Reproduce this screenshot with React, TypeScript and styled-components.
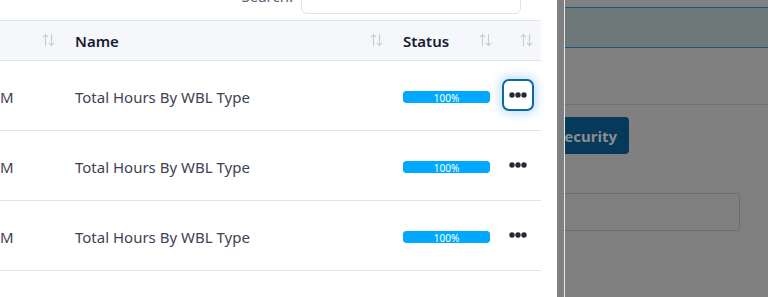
import styled, { createGlobalStyle, css } from 'styled-components';

const GlobalStyle = createGlobalStyle`
  html, body {
    margin: 0;
    padding: 0;
    background: #808080;
    overflow: hidden;
  }
  * {
    box-sizing: border-box;
  }
`;

const rows = [
  { time: 'M', name: 'Total Hours By WBL Type', progress: 100, focused: true },
  { time: 'M', name: 'Total Hours By WBL Type', progress: 100, focused: false },
  { time: 'M', name: 'Total Hours By WBL Type', progress: 100, focused: false },
];

const headers = ['', 'Name', 'Status', ''];

const SortIcon = () => (
  <svg width="13" height="14" viewBox="0 0 13 14" fill="none" stroke="#c9ccd4" strokeWidth="1.1">
    <path d="M3.5 13V1.5M1 4L3.5 1.5L6 4" />
    <path d="M9.5 1V12.5M7 10L9.5 12.5L12 10" />
  </svg>
);

const Dots = () => (
  <svg width="18" height="6" viewBox="0 0 18 6" fill="#252a35">
    <circle cx="3" cy="3" r="2.7" />
    <circle cx="9" cy="3" r="2.7" />
    <circle cx="15" cy="3" r="2.7" />
  </svg>
);

const App = () => {
  return (
    <>
      <GlobalStyle />
      <Page>
        <ListPanel>
          <SearchRow>
            <SearchLabel>
              Search:
              <SearchInput type="text" />
            </SearchLabel>
          </SearchRow>
          <Table>
            <HeaderRow>
              {headers.map((h, i) => (
                <HeadCell key={i} $flush={i === 0}>
                  <span>{h}</span>
                  <SortIcon />
                </HeadCell>
              ))}
            </HeaderRow>
            {rows.map((row, i) => (
              <BodyRow key={i}>
                <Cell $flush>{row.time}</Cell>
                <Cell>{row.name}</Cell>
                <Cell>
                  <Progress>
                    <ProgressFill style={{ width: `${row.progress}%` }}>{row.progress}%</ProgressFill>
                  </Progress>
                </Cell>
                <ActionCell>
                  <MenuButton $focused={row.focused}>
                    <Dots />
                  </MenuButton>
                </ActionCell>
              </BodyRow>
            ))}
          </Table>
        </ListPanel>

        <Backdrop>
          <DimmedForm>
            <TopBand />
            <Section />
            <ButtonRow>
              <DimButton>Security</DimButton>
            </ButtonRow>
            <DimInput />
          </DimmedForm>
        </Backdrop>
      </Page>
    </>
  );
};

const Page = styled.div`
  display: grid;
  grid-template-columns: 557px 1fr;
  width: 768px;
  height: 297px;
  overflow: hidden;
  font-family: 'Noto Sans', 'Open Sans', sans-serif;
`;

const ListPanel = styled.div`
  background: #ffffff;
  overflow: hidden;
`;

const SearchRow = styled.div`
  height: 20px;
  display: flex;
  justify-content: flex-end;
  align-items: flex-end;
  padding: 0 36px 6px 0;
  overflow: hidden;
`;

const SearchLabel = styled.label`
  display: flex;
  align-items: center;
  gap: 8px;
  font-size: 15px;
  color: #5e6278;
  padding-top: 10px;
`;

const SearchInput = styled.input`
  width: 220px;
  height: 36px;
  border: 1px solid #dde3ea;
  border-radius: 6px;
  background: #fff;
  outline: none;
`;

const Table = styled.div`
  width: 541px;
`;

const columns = '63px 328px 109px 41px';

const HeaderRow = styled.div`
  display: grid;
  grid-template-columns: ${columns};
  height: 41px;
  background: #f5f7fa;
  border-top: 1px solid #dfe4ea;
  border-bottom: 1px solid #dfe4ea;
`;

const HeadCell = styled.div<{ $flush?: boolean }>`
  display: flex;
  align-items: center;
  justify-content: space-between;
  padding: 0 8px 0 ${(p) => (p.$flush ? '0' : '12px')};
  font-size: 15px;
  font-weight: 600;
  color: #181c32;

  svg {
    margin-top: -2px;
  }
`;

const BodyRow = styled.div`
  display: grid;
  grid-template-columns: ${columns};
  height: 70px;
  border-bottom: 1px solid #dfe4ea;
  align-items: center;
`;

const Cell = styled.div<{ $flush?: boolean }>`
  padding: 2px 8px 0 ${(p) => (p.$flush ? '0' : '12px')};
  font-size: 15px;
  color: #3f4254;
  white-space: nowrap;
  overflow: hidden;
`;

const ActionCell = styled.div`
  padding-left: 2px;
  display: flex;
  align-items: center;
`;

const Progress = styled.div`
  width: 87px;
  height: 12px;
  margin-top: 1px;
  border-radius: 3px;
  background: #e9edf2;
  overflow: hidden;
`;

const ProgressFill = styled.div`
  height: 100%;
  background: #00a9ff;
  color: #fff;
  font-size: 10px;
  line-height: 15px;
  text-align: center;
  border-radius: 3px;
`;

const MenuButton = styled.button<{ $focused?: boolean }>`
  width: 32px;
  height: 32px;
  margin-top: -2px;
  display: flex;
  align-items: center;
  justify-content: center;
  padding: 0;
  background: #fff;
  border: 2px solid transparent;
  border-radius: 7px;
  cursor: pointer;

  ${(p) =>
    p.$focused &&
    css`
      border-color: #0c68a5;
      box-shadow: 0 0 10px 3px rgba(40, 150, 230, 0.28);
    `}
`;

const Backdrop = styled.div`
  background: #808080;
  padding-left: 7px;
`;

const DimmedForm = styled.div`
  height: 100%;
  border-left: 1px solid #dfe6ef;
  overflow: hidden;
`;

const TopBand = styled.div`
  margin-top: 7px;
  height: 41px;
  background: #6f7878;
  border-top: 1px solid #1d5677;
  border-bottom: 1px solid #1d5677;
`;

const Section = styled.div`
  height: 57px;
  border-bottom: 1px solid #727272;
`;

const ButtonRow = styled.div`
  padding-top: 12px;
  height: 88px;
`;

const DimButton = styled.button`
  margin-left: -14px;
  height: 37px;
  width: 78px;
  border: none;
  border-radius: 4px;
  background: #053a5b;
  color: #8d8d8d;
  font-family: 'Noto Sans', sans-serif;
  font-weight: 700;
  font-size: 15px;
  text-align: right;
  padding: 0 12px 0 0;
`;

const DimInput = styled.div`
  margin-left: -10px;
  width: 185px;
  height: 38px;
  border: 1px solid #6c6c6c;
  border-radius: 4px;
`;

export default App;
